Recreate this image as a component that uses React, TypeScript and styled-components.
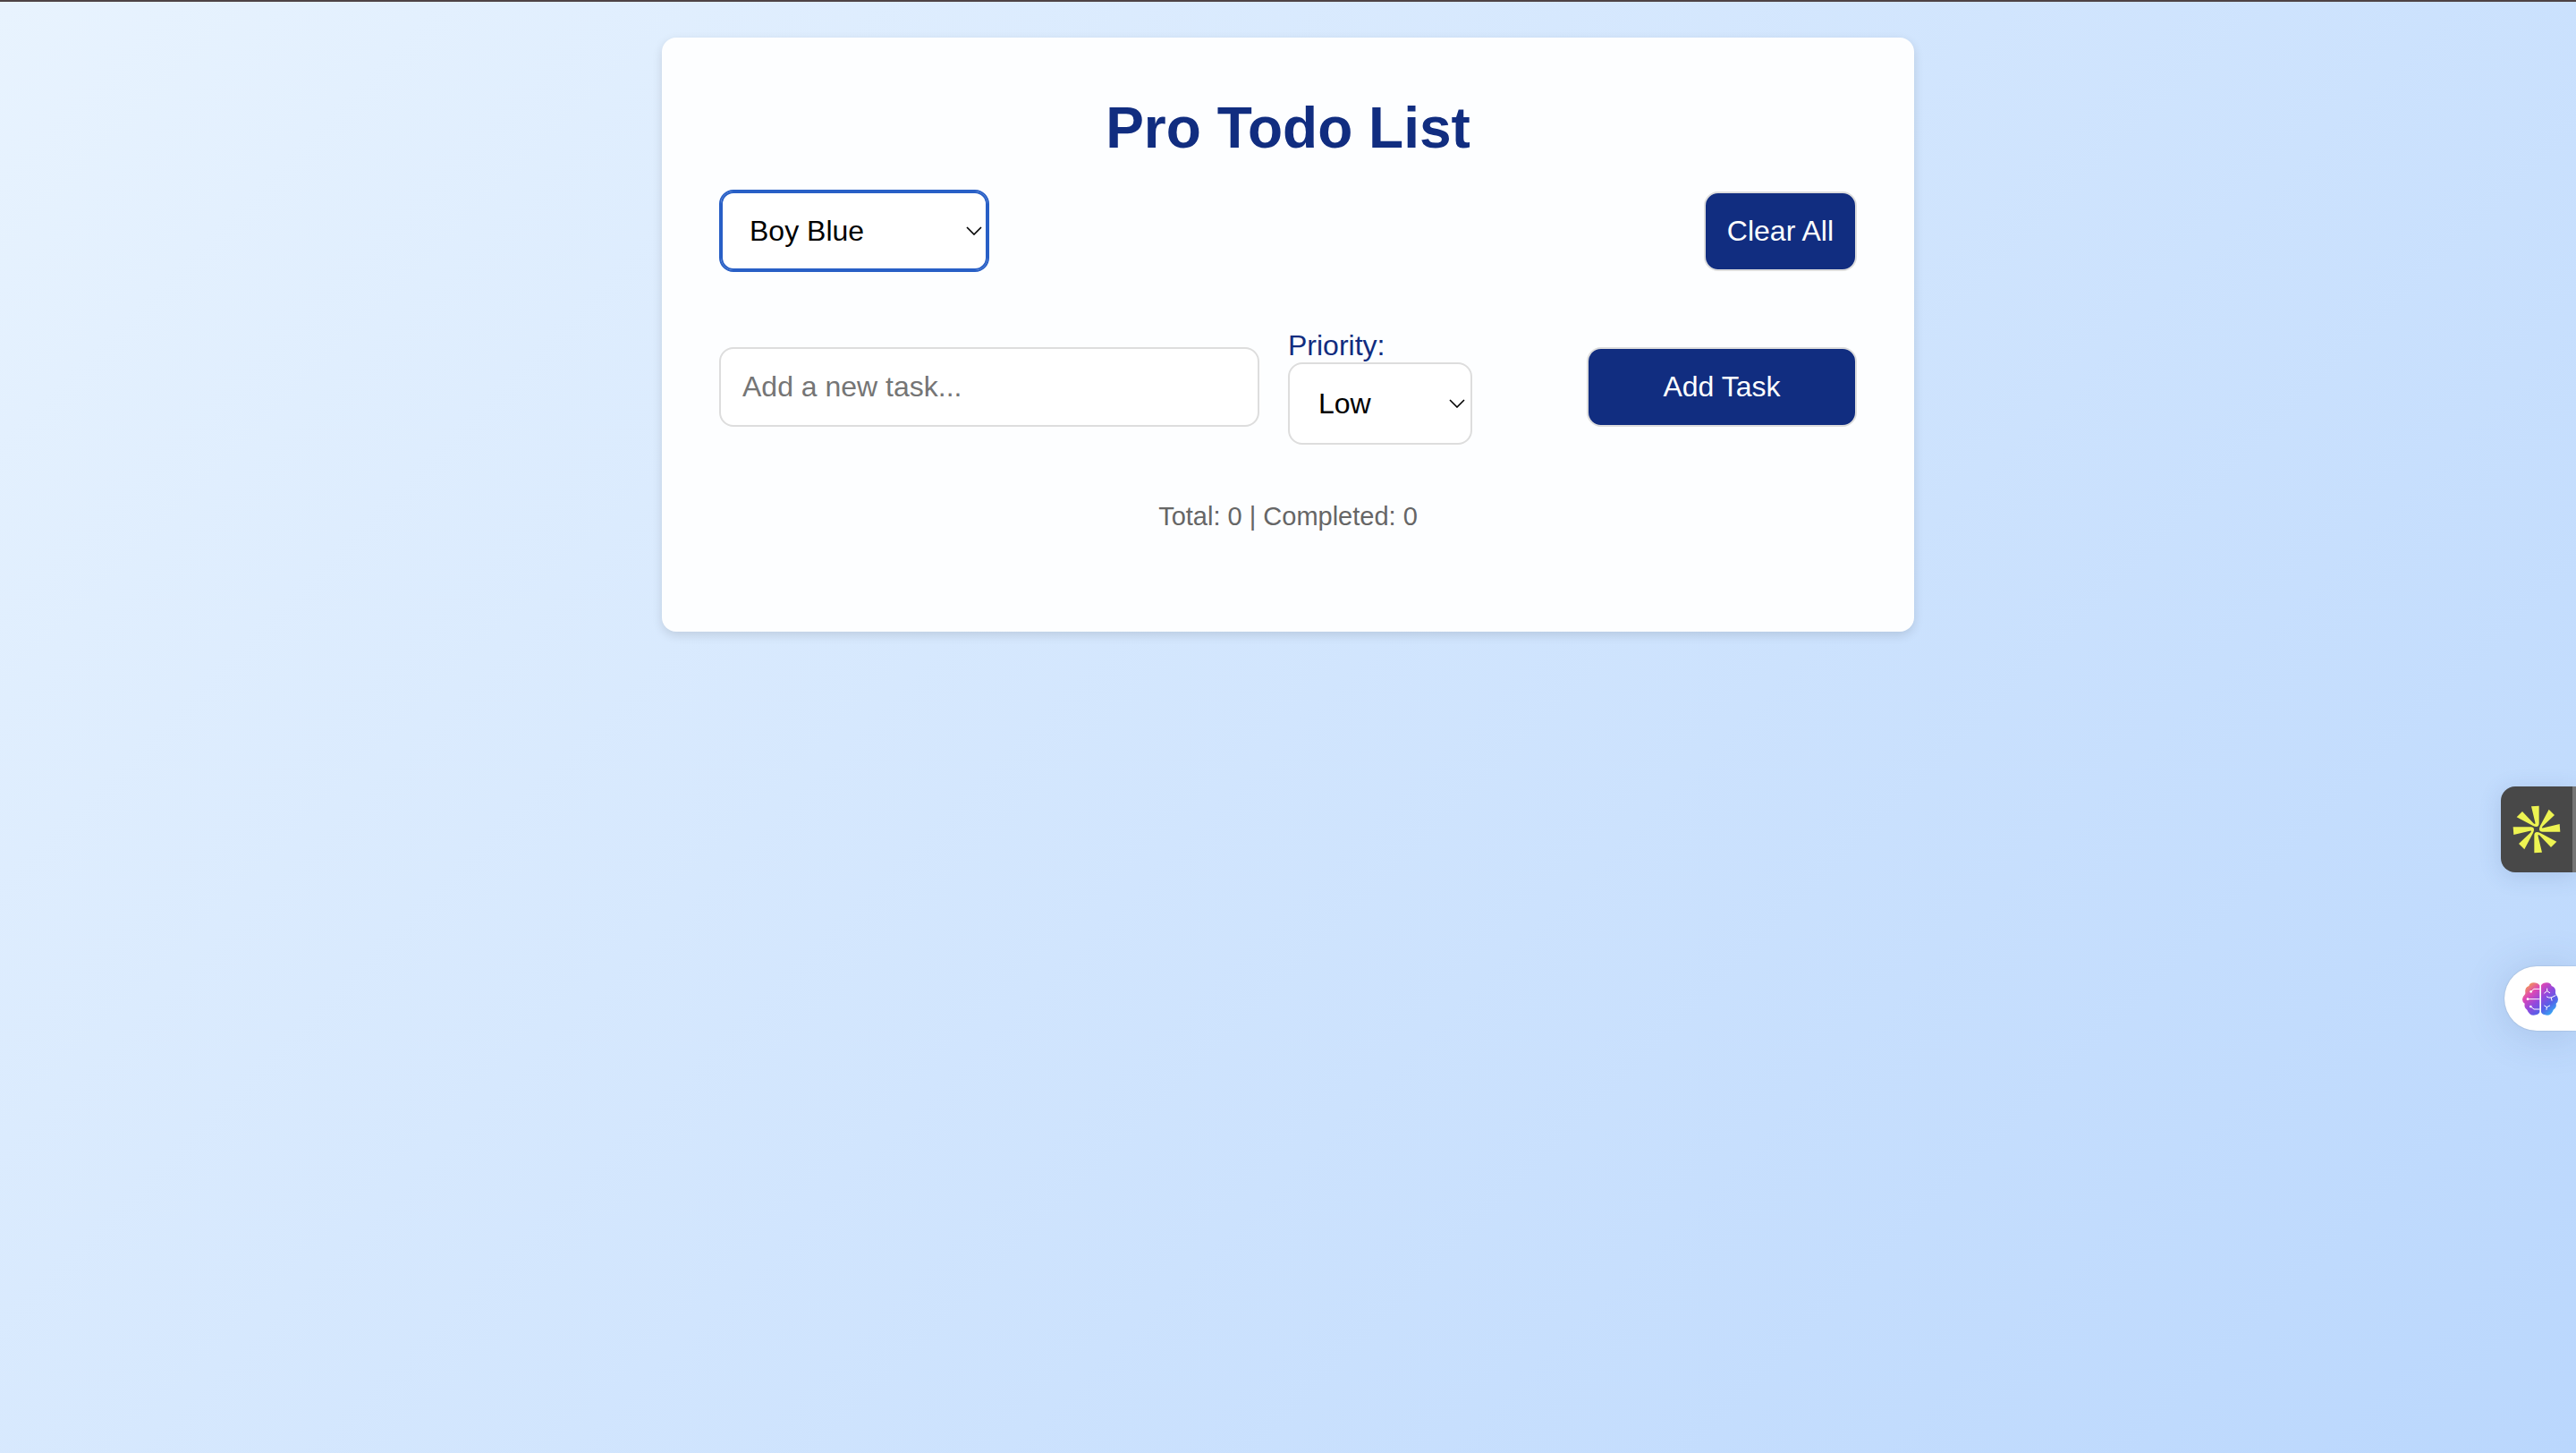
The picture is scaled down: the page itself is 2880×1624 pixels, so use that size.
import React, { useState } from "react";
import styled, { createGlobalStyle, css } from "styled-components";

const colors = {
  navy: "#112d80",
  focus: "#285fc6",
  border: "#dddddd",
  card: "#fdfeff",
  muted: "#666666",
};

const GlobalStyle = createGlobalStyle`
  *, *::before, *::after { box-sizing: border-box; }
  body {
    margin: 0;
    font-family: "Liberation Sans", Arial, sans-serif;
    font-size: 32px;
  }
`;

const Page = styled.div`
  min-height: 100vh;
  padding: 40px 20px;
  border-top: 2px solid #4e4345;
  background: linear-gradient(135deg, #e8f3fe 0%, #bad7fd 100%) border-box;
`;

const Card = styled.main`
  width: 100%;
  max-width: 1400px;
  margin: 0 auto;
  padding: 64px 64px 112px;
  border-radius: 16px;
  background: ${colors.card};
  box-shadow: 0 4px 12px rgba(0, 0, 0, 0.12);
`;

const Title = styled.h1`
  margin: 0 0 32px;
  color: ${colors.navy};
  font-size: 64px;
  line-height: 74px;
  text-align: center;
`;

const Toolbar = styled.div`
  display: flex;
  align-items: center;
  justify-content: space-between;
  margin-bottom: 64px;
`;

const TaskForm = styled.form`
  display: grid;
  grid-template-columns: 2fr 1fr 1fr;
  gap: 32px;
  align-items: center;
  margin-bottom: 64px;
`;

const control = css`
  border: 2px solid ${colors.border};
  border-radius: 16px;
  font-family: inherit;
  font-size: 32px;
  line-height: 37px;
`;

const TaskInput = styled.input`
  ${control}
  width: 100%;
  height: 89px;
  padding: 24px;
  background: #ffffff;
  color: #000000;
  &::placeholder {
    color: #757575;
    opacity: 1;
  }
`;

const Button = styled.button`
  ${control}
  height: 89px;
  padding: 24px;
  background: ${colors.navy};
  color: #ffffff;
  cursor: pointer;
`;

const PriorityField = styled.div`
  display: flex;
  flex-direction: column;
  align-items: flex-start;
`;

const PriorityLabel = styled.label`
  color: ${colors.navy};
  line-height: 37px;
`;

const SelectWrap = styled.div<{ $width: number }>`
  position: relative;
  width: ${(p) => p.$width}px;
`;

const Select = styled.select<{ $active?: boolean }>`
  ${control}
  appearance: none;
  display: block;
  width: 100%;
  height: 92px;
  padding: 0 32px;
  background: #ffffff;
  color: #000000;
  outline: none;
  ${(p) =>
    p.$active &&
    css`
      border-color: ${colors.focus};
      box-shadow: inset 0 0 0 2px ${colors.focus};
    `}
`;

const Chevron = styled.svg`
  position: absolute;
  top: 41px;
  right: 8px;
  width: 18px;
  height: 10px;
  pointer-events: none;
`;

const Stats = styled.p`
  margin: 0;
  color: ${colors.muted};
  font-size: 29px;
  line-height: 33px;
  text-align: center;
`;

const SideTab = styled.button`
  position: fixed;
  right: 0;
  padding: 0;
  border: 0;
  cursor: pointer;
  svg { display: block; }
`;

const SparkTab = styled(SideTab)`
  top: 879px;
  width: 84px;
  height: 96px;
  border-right: 4px solid #757575;
  border-radius: 16px 0 0 16px;
  background: #484848;
  box-shadow: 0 4px 24px rgba(60, 90, 140, 0.18);
`;

const BrainTab = styled(SideTab)`
  top: 1080px;
  width: 80px;
  height: 72px;
  padding-left: 20px;
  border-radius: 36px 0 0 36px;
  background: #ffffff;
  box-shadow: 0 4px 48px rgba(60, 90, 140, 0.2), 0 0 2px rgba(0, 0, 0, 0.2);
`;

function SelectBox(props: {
  id: string;
  label?: string;
  width: number;
  active?: boolean;
  value: string;
  options: string[];
  onChange: (value: string) => void;
}) {
  return (
    <SelectWrap $width={props.width}>
      <Select
        id={props.id}
        aria-label={props.label}
        $active={props.active}
        value={props.value}
        onChange={(e) => props.onChange(e.target.value)}
      >
        {props.options.map((o) => (
          <option key={o}>{o}</option>
        ))}
      </Select>
      <Chevron viewBox="0 0 18 10" fill="none" stroke="#000" strokeWidth="1.6" aria-hidden="true">
        <path d="M1 1L9 9L17 1" />
      </Chevron>
    </SelectWrap>
  );
}

const RAY_PAIR =
  "M210 124L236 122L236 181Q236 192 227 192Q222 192 216 189L161 160L180 141L217 180Q225 187 223 178Z";

function SparkLogo() {
  return (
    <svg width="80" height="96" viewBox="108 57 240 288" fill="#edf352" aria-hidden="true">
      {[0, 90, 180, 270].map((angle) => (
        <path key={angle} d={RAY_PAIR} transform={`rotate(${angle} 228 201)`} />
      ))}
    </svg>
  );
}

function BrainLogo() {
  return (
    <svg width="40" height="37" viewBox="180 112 120 111" fill="none" aria-hidden="true">
      <defs>
        <linearGradient id="brain" x1="195" y1="118" x2="280" y2="220" gradientUnits="userSpaceOnUse">
          <stop offset="0" stopColor="#f5a04c" />
          <stop offset="0.25" stopColor="#de48b4" />
          <stop offset="0.5" stopColor="#9548dc" />
          <stop offset="0.75" stopColor="#5560e8" />
          <stop offset="1" stopColor="#35b0f5" />
        </linearGradient>
      </defs>
      <path
        fill="url(#brain)"
        d="M238 122Q232 113 218 113Q205 113 202 124Q188 128 190 146Q191 150 188 153Q180 160 180 169Q180 178 188 183Q185 196 196 204Q203 222 218 222Q234 222 238 212Z"
      />
      <path
        fill="url(#brain)"
        d="M243 122Q248 113 262 113Q275 113 278 124Q293 128 291 146Q291 150 293 153Q300 160 300 169Q300 178 293 183Q296 196 284 204Q278 222 263 222Q247 222 243 212Z"
      />
      <g stroke="#fff" strokeWidth="3" strokeLinecap="round">
        <path d="M238 134H219L210 142M238 168H198M238 202H219L208 193" />
        <path d="M263 133V141L254 148M263 141L272 147M262 160Q268 165 277 163L291 156M277 163L279 173M254 190L262 195L272 190M262 195L261 203" />
      </g>
      <g fill="#fff">
        <circle cx="209" cy="143" r="4" />
        <circle cx="198" cy="168" r="4" />
        <circle cx="208" cy="193" r="4" />
      </g>
    </svg>
  );
}

export default function App() {
  const [theme, setTheme] = useState("Boy Blue");
  const [priority, setPriority] = useState("Low");
  const [task, setTask] = useState("");

  return (
    <>
      <GlobalStyle />
      <Page>
        <Card>
          <Title>Pro Todo List</Title>
          <Toolbar>
            <SelectBox
              id="theme"
              label="Theme"
              width={302}
              active
              value={theme}
              options={["Boy Blue"]}
              onChange={setTheme}
            />
            <Button type="button">Clear All</Button>
          </Toolbar>
          <TaskForm onSubmit={(e) => e.preventDefault()}>
            <TaskInput
              type="text"
              aria-label="New task"
              placeholder="Add a new task..."
              value={task}
              onChange={(e) => setTask(e.target.value)}
            />
            <PriorityField>
              <PriorityLabel htmlFor="priority">Priority:</PriorityLabel>
              <SelectBox
                id="priority"
                width={206}
                value={priority}
                options={["Low", "Medium", "High"]}
                onChange={setPriority}
              />
            </PriorityField>
            <Button type="submit">Add Task</Button>
          </TaskForm>
          <Stats>Total: 0 | Completed: 0</Stats>
        </Card>
        <SparkTab type="button" aria-label="Open spark panel">
          <SparkLogo />
        </SparkTab>
        <BrainTab type="button" aria-label="Open brain panel">
          <BrainLogo />
        </BrainTab>
      </Page>
    </>
  );
}
